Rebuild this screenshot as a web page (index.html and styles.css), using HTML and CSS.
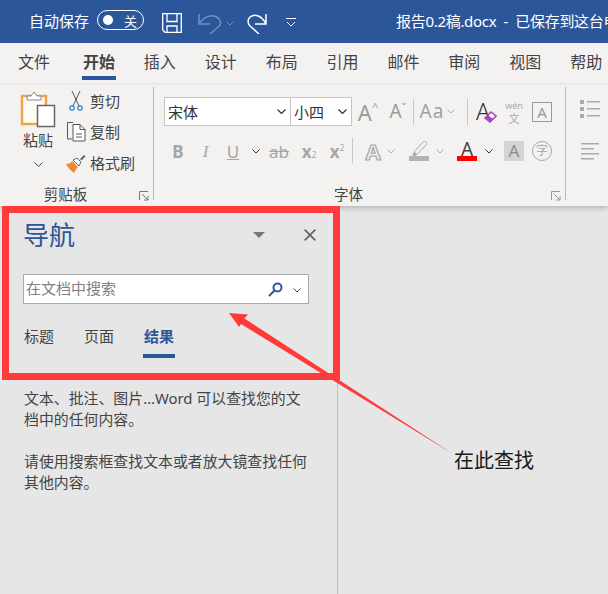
FILE: index.html
```html
<!DOCTYPE html>
<html lang="zh-CN">

<head>
    <meta charset="UTF-8">
    <title>导航窗格</title>
    <link rel="stylesheet" href="styles.css">
</head>

<body>
    <div class="page">
        <div class="titlebar">
            <span class="autosave">自动保存</span>
            <div class="toggle"><i class="toggle-dot"></i><span>关</span></div>
            <svg class="save" width="20" height="20" viewBox="0 0 20 20" fill="none" stroke="#fff" stroke-width="1.3">
                <path d="M.7.7h18.6v18.6H3L.7 17z" />
                <path d="M5 1v7.5h10V1M5 19.300v-6.300h10v6.300" />
            </svg>
            <svg class="undo" width="26" height="21" viewBox="0 0 26 21" fill="none" stroke="#6f8fc0" stroke-width="1.5">
                <path d="M1 1v10h11M1 11C6 3 16 0 21 6c3 4 1 7-2 9l-7 6" />
            </svg>
            <svg class="mini-down" width="8" height="5" viewBox="0 0 8 5" fill="none" stroke="#6f8fc0"><path d="M.5.500 4 4 7.500.5" /></svg>
            <svg class="redo" width="21" height="21" viewBox="0 0 21 21" fill="none" stroke="#fff" stroke-width="1.500">
                <path d="M19 1v10H8M19 11C15 3 8 0 3 4c-3 3-2 7 0 9l9 8" />
            </svg>
            <svg class="custom" width="10" height="9" viewBox="0 0 10 9" fill="none" stroke="#fff"><path d="M0 .5h10M1 4l4 4 4-4" /></svg>
            <span class="doc-title">报告0.2稿.docx &nbsp;-&nbsp; 已保存到这台电脑</span>
        </div>

        <div class="tabs">
            <span class="tab first">文件</span>
            <span class="tab active">开始</span>
            <span class="tab">插入</span>
            <span class="tab">设计</span>
            <span class="tab">布局</span>
            <span class="tab">引用</span>
            <span class="tab">邮件</span>
            <span class="tab">审阅</span>
            <span class="tab">视图</span>
            <span class="tab">帮助</span>
        </div>

        <div class="ribbon">
            <div class="group group-clip">
                <div class="clip-body">
                    <div class="paste">
                        <svg width="36" height="38" viewBox="0 0 36 38">
                            <rect x="2" y="6" width="24" height="28" fill="#fdfbf6" stroke="#f0a24a" stroke-width="2.400" />
                            <path d="M7 10V6h4l3-4 3 4h4v4z" fill="#fff" stroke="#8a8a8a" />
                            <rect x="17.500" y="15.500" width="17" height="21" fill="#fff" stroke="#666" stroke-width="1.500" />
                        </svg>
                        <span>粘贴</span>
                        <svg class="chev" width="9" height="5" viewBox="0 0 9 5" fill="none" stroke="#444"><path d="M.5.500 4.500 4.500 8.500.5" /></svg>
                    </div>
                    <div class="clip-list">
                        <div class="clip-item">
                            <svg width="20" height="20" viewBox="0 0 20 20" fill="none">
                                <path d="M6 0l7 15M14 0L7 15" stroke="#555" />
                                <circle cx="6" cy="17" r="2.200" stroke="#2b7cd3" stroke-width="1.200" />
                                <circle cx="14" cy="17" r="2.200" stroke="#2b7cd3" stroke-width="1.200" />
                            </svg>
                            <span>剪切</span>
                        </div>
                        <div class="clip-item">
                            <svg width="20" height="20" viewBox="0 0 20 20" fill="none" stroke="#555">
                                <path d="M7 .5H1.500v16.500H6" />
                                <path d="M7 2.500h7l5 5v11.500H7z" fill="#fff" />
                                <path d="M14 2.500v5h5M10 12h6M10 15h6" />
                            </svg>
                            <span>复制</span>
                        </div>
                        <div class="clip-item">
                            <svg width="20" height="20" viewBox="0 0 20 20">
                                <path d="M0 11c3 0 5-1 6-3l6 6c-2 2-3 4-4 6-3-2-6-5-8-9z" fill="#ed8a2e" />
                                <path d="M7 7l4-2 4 4-2 4z" fill="#fff" stroke="#666" />
                                <path d="M14 6l4-4 1.500 1.500-4 4z" fill="#666" />
                            </svg>
                            <span>格式刷</span>
                        </div>
                    </div>
                </div>
                <div class="group-label">剪贴板
                    <svg class="launcher" width="10" height="10" viewBox="0 0 10 10" fill="none" stroke="#777"><path d="M.5 9V.5H9M3 3l6 6M9 5v4H5" /></svg>
                </div>
            </div>

            <div class="group group-font">
                <div class="font-rows">
                    <div class="row row-top">
                        <div class="select select-name"><span>宋体</span><svg width="9" height="5" viewBox="0 0 9 5" fill="none" stroke="#333" stroke-width="1.200"><path d="M.5.500 4.500 4.500 8.500.5" /></svg></div>
                        <div class="select select-size"><span>小四</span><svg width="9" height="5" viewBox="0 0 9 5" fill="none" stroke="#333" stroke-width="1.200"><path d="M.5.500 4.500 4.500 8.500.5" /></svg></div>
                        <span class="tool t30 big-a">A<sup>^</sup></span>
                        <span class="tool t30 big-a small-a">A<sup>ˇ</sup></span>
                        <i class="sep"></i>
                        <span class="tool t34 case-a">Aa</span>
                        <svg class="tool-chev case-chev" width="8" height="5" viewBox="0 0 8 5" fill="none" stroke="#aaa"><path d="M.5.500 4 4 7.500.5" /></svg>
                        <i class="sep sep-b"></i>
                        <span class="tool t30 clear-a">A<svg width="13" height="13" viewBox="0 0 13 13"><path d="M1 8l6-6 5 4-6 6z" fill="#fff" stroke="#a349b8" stroke-width="1.600" /><path d="M1 8l3-3 5 4-3 3z" fill="#a349b8" /></svg></span>
                        <span class="wen"><small>wén</small>文</span>
                        <span class="boxed-a">A</span>
                    </div>
                    <div class="row row-bottom">
                        <span class="tool t28 b">B</span>
                        <span class="tool t27 it">I</span>
                        <span class="tool t28 un">U</span>
                        <svg class="tool-chev dark c-u" width="8" height="5" viewBox="0 0 8 5" fill="none" stroke="#333"><path d="M.5.500 4 4 7.500.5" /></svg>
                        <span class="tool t32 strike">ab</span>
                        <span class="tool t28 sub">x<sub>2</sub></span>
                        <span class="tool t28 sub">x<sup>2</sup></span>
                        <i class="sep sep-c"></i>
                        <span class="tool t28 outline-a">A</span>
                        <svg class="tool-chev outline-chev" width="8" height="5" viewBox="0 0 8 5" fill="none" stroke="#aaa"><path d="M.5.500 4 4 7.500.5" /></svg>
                        <svg class="marker" width="20" height="20" viewBox="0 0 20 20">
                            <path d="M5 11L14 1c1-1 2-1 3 0s1 2 0 3L8 13.500z" fill="#f3f2f1" stroke="#aaa" />
                            <path d="M5 11l3 2.500-2 1.500-3-.5z" fill="#aaa" />
                            <rect y="15" width="20" height="5" fill="#b3b3b3" />
                        </svg>
                        <svg class="tool-chev mark-chev" width="8" height="5" viewBox="0 0 8 5" fill="none" stroke="#aaa"><path d="M.5.500 4 4 7.500.5" /></svg>
                        <span class="color-a">A</span>
                        <svg class="tool-chev dark c-color" width="8" height="5" viewBox="0 0 8 5" fill="none" stroke="#333"><path d="M.5.500 4 4 7.500.5" /></svg>
                        <span class="shade-a">A</span>
                        <span class="circle-zi">字</span>
                    </div>
                </div>
                <div class="group-label">字体
                    <svg class="launcher" width="10" height="10" viewBox="0 0 10 10" fill="none" stroke="#999"><path d="M.5 9V.5H9M3 3l6 6M9 5v4H5" /></svg>
                </div>
            </div>

            <div class="group-para">
                <svg width="20" height="19" viewBox="0 0 20 19" fill="#aaa">
                    <rect y="0" width="4" height="4" /><rect x="7" y="1" width="13" height="1.500" />
                    <rect y="7" width="4" height="4" /><rect x="7" y="8" width="13" height="1.500" />
                    <rect y="14" width="4" height="4" /><rect x="7" y="15" width="13" height="1.500" />
                </svg>
                <svg class="align" width="18" height="17" viewBox="0 0 18 17" fill="#aaa">
                    <rect width="18" height="1.500" /><rect y="5" width="13" height="1.500" /><rect y="10" width="18" height="1.500" /><rect y="15" width="13" height="1.500" />
                </svg>
            </div>
        </div>

        <div class="workspace">
            <div class="nav">
                <div class="nav-head">
                    <span class="nav-title">导航</span>
                    <svg class="nav-menu" width="12" height="6" viewBox="0 0 12 6" fill="#777"><path d="M0 0h12L6 6z" /></svg>
                    <svg class="nav-close" width="12" height="12" viewBox="0 0 12 12" fill="none" stroke="#666" stroke-width="1.800"><path d="M.7.700l10.600 10.600M11.300.7.700 11.300" /></svg>
                </div>
                <div class="search">
                    <span>在文档中搜索</span>
                    <svg class="search-icon" width="15" height="15" viewBox="0 0 15 15" fill="none" stroke="#2b579a" stroke-width="2"><circle cx="9.500" cy="5.500" r="4" /><path d="M6.500 8.500L1 14" /></svg>
                    <svg class="search-down" width="8" height="5" viewBox="0 0 8 5" fill="none" stroke="#444"><path d="M.5.500 4 4 7.500.5" /></svg>
                </div>
                <div class="nav-tabs">
                    <span class="nav-tab">标题</span>
                    <span class="nav-tab">页面</span>
                    <span class="nav-tab current">结果</span>
                </div>
                <div class="nav-text">
                    <p>文本、批注、图片…Word 可以查找您的文档中的任何内容。</p>
                    <p>请使用搜索框查找文本或者放大镜查找任何其他内容。</p>
                </div>
            </div>
        </div>

        <div class="mark-box"></div>
        <svg class="mark-arrow" width="608" height="594" viewBox="0 0 608 594">
            <path d="M229 313L248 314.500 244.500 318.500 453 454 241 324 239 327z" fill="#ff3a3a" />
        </svg>
        <span class="mark-text">在此查找</span>
    </div>
</body>

</html>
```

FILE: styles.css
```css
* {
    box-sizing: border-box;
}

body {
    margin: 0;
    font-family: "Noto Sans", "Noto Sans CJK SC", sans-serif;
}

.page {
    position: relative;
    width: 608px;
    height: 594px;
    overflow: hidden;
    display: flex;
    flex-direction: column;
    background: #e6e6e6;
    color: #444;
}

svg {
    display: block;
    flex: none;
}

/* title bar */
.titlebar {
    height: 43px;
    flex: none;
    display: flex;
    align-items: center;
    padding: 0 0 3px 29px;
    background: #2b579a;
    color: #fff;
    font-size: 15px;
    white-space: nowrap;
    overflow: hidden;
}

.autosave {
    flex: none;
}

.toggle {
    width: 47px;
    height: 20px;
    flex: none;
    margin-left: 8px;
    padding: 0 6px 0 5px;
    display: flex;
    align-items: center;
    justify-content: space-between;
    border: 1.5px solid #fff;
    border-radius: 10px;
    font-size: 13px;
}

.toggle-dot {
    width: 10px;
    height: 10px;
    border-radius: 50%;
    background: #fff;
}

.save {
    margin: 6px 0 0 18px;
}

.undo {
    margin: 6px 0 0 16px;
}

.mini-down {
    margin: 6px 0 0 2px;
}

.redo {
    margin: 6px 0 0 13px;
}

.custom {
    margin: 4px 0 0 18px;
}

.doc-title {
    margin-left: 100px;
    flex: none;
    letter-spacing: -0.3px;
}

/* tabs */
.tabs {
    height: 42px;
    flex: none;
    display: flex;
    gap: 28.900px;
    padding-left: 18px;
    background: #f3f2f1;
    font-size: 16px;
    line-height: 38px;
    white-space: nowrap;
}

.tab {
    flex: none;
    height: 37px;
}

.tab.first {
    margin-right: 4px;
}

.tab.active {
    font-weight: 700;
    margin: 0 -1px;
    padding: 0 1px;
    border-bottom: 4px solid #2b579a;
}

/* ribbon */
.ribbon {
    height: 121px;
    flex: none;
    display: flex;
    align-items: flex-start;
    background: #f3f2f1;
    box-shadow: 0 2px 5px rgba(0, 0, 0, 0.22);
    position: relative;
    font-size: 15px;
}

.group {
    height: 113px;
    margin-top: 2px;
    display: flex;
    flex-direction: column;
    border-right: 1px solid #b9b9b9;
}

.group-clip {
    width: 154px;
}

.group-font {
    width: 412px;
}

.group-label {
    margin-top: auto;
    margin-bottom: -3px;
    height: 18px;
    line-height: 18px;
    display: flex;
    justify-content: center;
    position: relative;
    padding-right: 22px;
    font-size: 14.500px;
}

.launcher {
    position: absolute;
    right: 4px;
    bottom: 2px;
}

.clip-body {
    display: flex;
    padding-left: 20px;
}

.paste {
    width: 36px;
    padding-top: 3px;
    display: flex;
    flex-direction: column;
    align-items: center;
    line-height: 20px;
}

.paste span {
    margin-top: 2px;
    white-space: nowrap;
}

.chev {
    margin-top: 12px;
}

.clip-list {
    margin: -2px 0 0 10px;
}

.clip-item {
    height: 31px;
    display: flex;
    align-items: center;
    gap: 4px;
}

.font-rows {
    padding: 10px 0 0 10px;
}

.row {
    display: flex;
    align-items: center;
    color: #a6a6a6;
}

.row-top {
    height: 29px;
}

.row-bottom {
    height: 24px;
    margin-top: 13px;
}

.select {
    height: 29px;
    flex: none;
    display: flex;
    align-items: center;
    justify-content: space-between;
    padding: 0 4px 0 3px;
    background: #fff;
    border: 1px solid #c4c4c4;
    color: #333;
}

.select-name {
    width: 127px;
}

.select-size {
    width: 62px;
    margin-left: -1px;
    margin-right: 1px;
}

.tool {
    display: flex;
    align-items: center;
    justify-content: center;
    flex: none;
    line-height: 1;
}

.t27 {
    width: 27px;
}

.t28 {
    width: 28px;
}

.t30 {
    width: 30px;
}

.t32 {
    width: 32px;
}

.t34 {
    width: 34px;
}

.big-a {
    font-size: 22px;
    color: #9b9b9b;
}

.big-a sup {
    font-size: 11px;
    align-self: flex-start;
}

.small-a {
    font-size: 19px;
}

.sep {
    width: 1px;
    height: 26px;
    flex: none;
    background: #c8c8c8;
}

.sep-b {
    margin-left: 12px;
}

.sep-c {
    margin: 0 6px 0 1px;
}

.case-a {
    font-size: 19px;
    margin-left: 1px;
    letter-spacing: 1px;
    color: #a0a0a0;
}

.tool-chev {
    margin-left: 1px;
}

.case-chev {
    margin-left: -2px;
}

.outline-chev {
    margin-left: 0;
}

.clear-a {
    position: relative;
    font-size: 23px;
    color: #333;
    font-weight: 300;
}

.clear-a svg {
    position: absolute;
    left: 16px;
    bottom: 0;
}

.wen {
    width: 24px;
    flex: none;
    margin-left: 4px;
    display: flex;
    flex-direction: column;
    align-items: center;
    font-size: 11px;
    line-height: 13px;
    color: #aaa;
}

.wen small {
    font-size: 9px;
    line-height: 13px;
}

.boxed-a {
    width: 20px;
    height: 20px;
    flex: none;
    margin-left: 6px;
    display: flex;
    align-items: center;
    justify-content: center;
    border: 1.500px solid #999;
    font-size: 15px;
    color: #999;
}

.b {
    font-size: 17px;
    font-weight: 700;
}

.it {
    font-size: 17px;
    font-style: italic;
    font-family: "Liberation Serif", serif;
}

.un {
    font-size: 17px;
    text-decoration: underline;
}

.c-u {
    margin: 0 5px;
}

.strike {
    font-size: 17px;
    text-decoration: line-through;
    margin-left: -2px;
}

.sub {
    font-size: 17px;
    font-weight: 700;
}

.sub sub,
.sub sup {
    font-size: 8px;
    font-weight: 400;
    line-height: 10px;
    vertical-align: baseline;
}

.sub sub {
    align-self: flex-end;
}

.sub sup {
    align-self: flex-start;
}

.outline-a {
    font-size: 22px;
    font-weight: 700;
    color: #f3f2f1;
    -webkit-text-stroke: 1.200px #a6a6a6;
}

.marker {
    margin-left: 14px;
}

.mark-chev {
    margin-left: 7px;
}

.color-a {
    width: 20px;
    height: 20px;
    flex: none;
    margin-left: 13px;
    text-align: center;
    font-size: 19px;
    line-height: 16px;
    color: #444;
    border-bottom: 5px solid #f00;
}

.c-color {
    margin-left: 8px;
}

.shade-a {
    width: 20px;
    height: 20px;
    flex: none;
    margin-left: 11px;
    text-align: center;
    font-size: 17px;
    line-height: 20px;
    background: #d4d4d4;
    color: #8c8c8c;
}

.circle-zi {
    width: 20px;
    height: 20px;
    flex: none;
    margin-left: 8px;
    border: 1.500px solid #a6a6a6;
    border-radius: 50%;
    text-align: center;
    font-size: 12px;
    line-height: 17px;
}

.group-para {
    padding: 15px 0 0 14px;
}

.align {
    margin: 24px 0 0 1px;
}

/* navigation pane */
.workspace {
    flex: 1;
    min-height: 0;
}

.nav {
    width: 338px;
    height: 100%;
    border-right: 1px solid #bdbdbd;
}

.nav-head {
    height: 58px;
    display: flex;
    align-items: center;
    padding: 0 0 2px 23px;
}

.nav-title {
    font-size: 26px;
    color: #2b579a;
}

.nav-menu {
    margin: 2px 0 0 178px;
}

.nav-close {
    margin: 2px 0 0 39px;
}

.search {
    width: 286px;
    height: 30px;
    margin: 10px 0 0 23px;
    display: flex;
    align-items: center;
    padding: 0 0 0 2px;
    background: #fff;
    border: 1px solid #a9a9a9;
    font-size: 15px;
    color: #808080;
}

.search span {
    margin-bottom: 3px;
}

.search-icon {
    margin-left: auto;
}

.search-down {
    margin: 2px 7px 0 10px;
}

.nav-tabs {
    display: flex;
    margin: 20px 0 0 24px;
    font-size: 15px;
    line-height: 24px;
}

.nav-tab {
    height: 34px;
    width: 30px;
    margin-right: 30px;
    white-space: nowrap;
}

.nav-tab.current {
    width: 32px;
    margin-left: -1px;
    padding-left: 1px;
    font-weight: 700;
    color: #2b579a;
    border-bottom: 4px solid #2b579a;
}

.nav-text {
    width: 284px;
    margin: 30px 0 0 24px;
    font-size: 14.900px;
    line-height: 21px;
}

.nav-text p {
    margin: 0 0 21px;
}

/* red annotation on top of the screenshot */
.mark-box {
    position: absolute;
    left: 2px;
    top: 206px;
    width: 338px;
    height: 174px;
    border: 7px solid #ff3a3a;
}

.mark-arrow {
    position: absolute;
    left: 0;
    top: 0;
}

.mark-text {
    position: absolute;
    left: 454px;
    top: 447px;
    font-size: 20px;
    line-height: 28px;
    color: #1a1a1a;
}
```
